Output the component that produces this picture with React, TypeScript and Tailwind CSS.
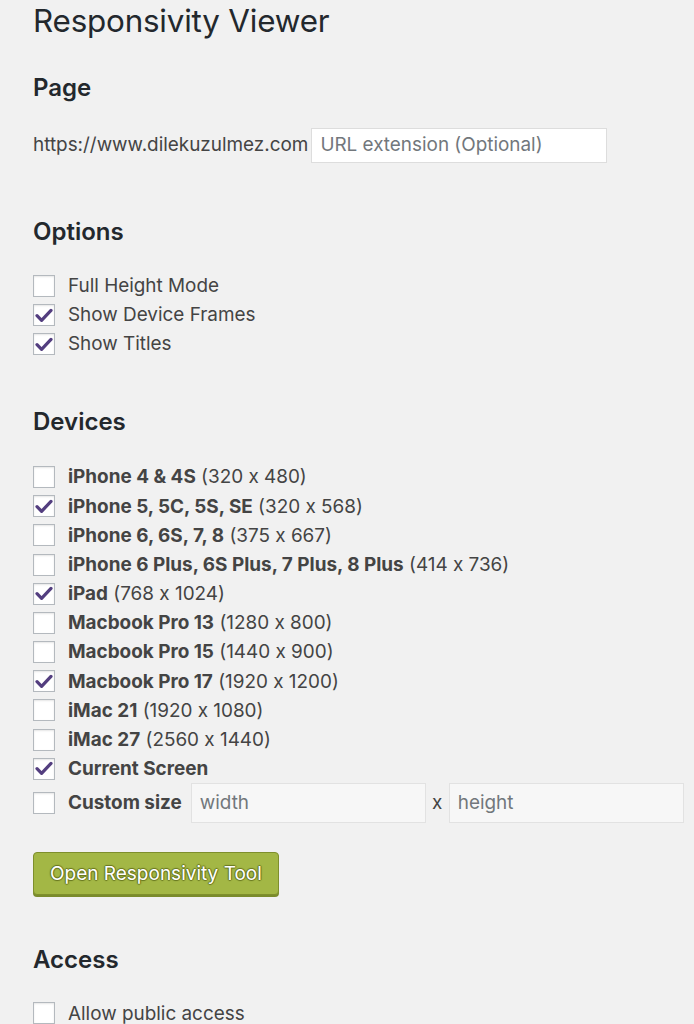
import React from 'react'

const font = { fontFamily: 'Inter, "Noto Sans", sans-serif', fontFeatureSettings: '"calt" 0' }

type Device = { name: string; size?: string; checked: boolean }

const devices: Device[] = [
  { name: 'iPhone 4 & 4S', size: '(320 x 480)', checked: false },
  { name: 'iPhone 5, 5C, 5S, SE', size: '(320 x 568)', checked: true },
  { name: 'iPhone 6, 6S, 7, 8', size: '(375 x 667)', checked: false },
  { name: 'iPhone 6 Plus, 6S Plus, 7 Plus, 8 Plus', size: '(414 x 736)', checked: false },
  { name: 'iPad', size: '(768 x 1024)', checked: true },
  { name: 'Macbook Pro 13', size: '(1280 x 800)', checked: false },
  { name: 'Macbook Pro 15', size: '(1440 x 900)', checked: false },
  { name: 'Macbook Pro 17', size: '(1920 x 1200)', checked: true },
  { name: 'iMac 21', size: '(1920 x 1080)', checked: false },
  { name: 'iMac 27', size: '(2560 x 1440)', checked: false },
  { name: 'Current Screen', checked: true },
]

function Box({ checked }: { checked: boolean }) {
  return (
    <span className="w-[22px] h-[22px] shrink-0 bg-white border border-[#b4b9be] shadow-[inset_0_1px_2px_rgba(0,0,0,0.1)] flex items-center justify-center">
      {checked && (
        <svg width="18" height="15" viewBox="0 0 18 15">
          <path d="M2 7.6 L6.6 12.3 L16 2.4" fill="none" stroke="#533e7f" strokeWidth="3.2" strokeLinecap="round" strokeLinejoin="round" />
        </svg>
      )}
    </span>
  )
}

function Heading({ children }: { children: React.ReactNode }) {
  return <h2 className="h-[30px] flex items-center text-[24px] font-semibold text-[#23282d]">{children}</h2>
}

export default function App() {
  return (
    <div className="min-h-screen bg-[#f1f1f1] px-[33px] text-[18.9px] text-[#444] whitespace-nowrap" style={font}>
      <h1 className="h-[44px] flex items-center text-[31.4px] text-[#23282d] tracking-[-0.2px]">Responsivity Viewer</h1>

      <div className="mt-[29px]">
        <Heading>Page</Heading>
      </div>
      <div className="mt-[25px] flex items-center h-[35px]">
        <span>https://www.dilekuzulmez.com</span>
        <div className="ml-[3px] w-[296px] h-[35px] bg-white border border-[#dddddd] flex items-center px-[8px] text-[#72777c]">
          URL extension (Optional)
        </div>
      </div>

      <div className="mt-[54px]">
        <Heading>Options</Heading>
      </div>
      <div className="mt-[24.5px] flex flex-col">
        {[
          ['Full Height Mode', false],
          ['Show Device Frames', true],
          ['Show Titles', true],
        ].map(([label, checked]) => (
          <div key={label as string} className="h-[29px] flex items-center gap-[13px]">
            <Box checked={checked as boolean} />
            <span className="pt-[1px]">{label as string}</span>
          </div>
        ))}
      </div>

      <div className="mt-[48.5px]">
        <Heading>Devices</Heading>
      </div>
      <div className="mt-[25.4px] flex flex-col">
        {devices.map(d => (
          <div key={d.name} className="h-[29.2px] flex items-center gap-[13px]">
            <Box checked={d.checked} />
            <span className="pt-[1px]">
              <span className="font-bold">{d.name}</span>
              {d.size && <span> {d.size}</span>}
            </span>
          </div>
        ))}
        <div className="h-[40px] flex items-center">
          <Box checked={false} />
          <span className="ml-[13px] font-bold shrink-0">Custom size</span>
          <div className="ml-[9px] w-[235px] shrink-0 h-[40px] bg-[#f7f7f7] border border-[#e2e2e2] flex items-center px-[8px] text-[#72777c]">
            width
          </div>
          <span className="w-[23px] shrink-0 text-center">x</span>
          <div className="w-[235px] shrink-0 h-[40px] bg-[#f7f7f7] border border-[#e2e2e2] flex items-center px-[8px] text-[#72777c]">
            height
          </div>
        </div>
      </div>

      <button className="mt-[29px] h-[43px] px-[16px] rounded-[4px] bg-[#a3b745] border border-[#7e8f2c] shadow-[0_2px_0_#7a8b2c] text-white text-[19px] [text-shadow:0_-1px_1px_#66751f,1px_0_1px_#66751f,0_1px_1px_#66751f,-1px_0_1px_#66751f]">
        Open Responsivity Tool
      </button>

      <div className="mt-[50px]">
        <Heading>Access</Heading>
      </div>
      <div className="mt-[23.5px] h-[29px] flex items-center gap-[13px]">
        <Box checked={false} />
        <span className="pt-[1px]">Allow public access</span>
      </div>
    </div>
  )
}
